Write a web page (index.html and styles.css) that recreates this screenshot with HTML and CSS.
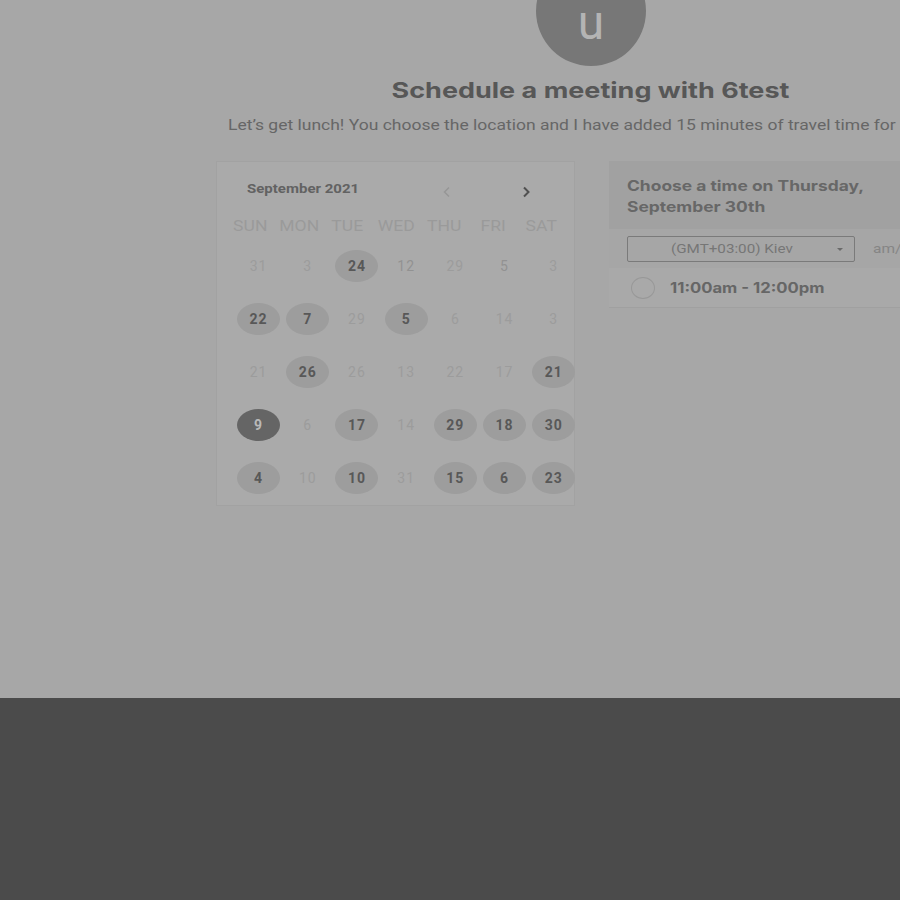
FILE: index.html
```html
<!DOCTYPE html>
<html>
<head>
<meta charset="utf-8">
<link rel="stylesheet" href="styles.css">
</head>
<body>
<div class="viewport">
  <div class="page">
    <div class="avatar"><span>u</span></div>
    <h1 class="title"><span class="wide">Schedule a meeting with 6test</span></h1>
    <p class="subtitle"><span class="wide">Let’s get lunch! You choose the location and I have added 15 minutes of travel time for meeting.</span></p>
    <div class="columns">
      <div class="calendar">
        <div class="cal-head">
          <span class="month"><span class="wide-l">September 2021</span></span>
          <span class="nav prev"><svg width="12" height="12" viewBox="0 0 12 12"><path d="M8 1.5 L3.5 6 L8 10.5" fill="none" stroke="currentColor" stroke-width="1.5"/></svg></span>
          <span class="nav next"><svg width="12" height="12" viewBox="0 0 12 12"><path d="M4 1.5 L8.5 6 L4 10.5" fill="none" stroke="currentColor" stroke-width="2"/></svg></span>
        </div>
        <div class="weekdays">
          <span>SUN</span><span>MON</span><span>TUE</span><span>WED</span><span>THU</span><span>FRI</span><span>SAT</span>
        </div>
        <div class="days">
          <span class="d off">31</span><span class="d off">3</span><span class="d av">24</span><span class="d mid">12</span><span class="d off">29</span><span class="d mid">5</span><span class="d off">3</span>
          <span class="d av">22</span><span class="d av">7</span><span class="d off">29</span><span class="d av">5</span><span class="d off">6</span><span class="d off">14</span><span class="d off">3</span>
          <span class="d off">21</span><span class="d av">26</span><span class="d off">26</span><span class="d off">13</span><span class="d off">22</span><span class="d off">17</span><span class="d av">21</span>
          <span class="d sel">9</span><span class="d off">6</span><span class="d av">17</span><span class="d off">14</span><span class="d av">29</span><span class="d av">18</span><span class="d av">30</span>
          <span class="d av">4</span><span class="d off">10</span><span class="d av">10</span><span class="d off">31</span><span class="d av">15</span><span class="d av">6</span><span class="d av">23</span>
        </div>
      </div>
      <div class="times">
        <div class="times-head">
          <span class="wide-l">Choose a time on Thursday,</span><br>
          <span class="wide-l">September 30th</span>
        </div>
        <div class="tz-row">
          <div class="tz-select"><span class="wide-l">(GMT+03:00) Kiev</span><span class="caret"></span></div>
          <span class="ampm"><span class="wide-l">am/pm</span></span>
        </div>
        <div class="slot">
          <span class="radio"></span>
          <span class="slot-text"><span class="wide-l">11:00am - 12:00pm</span></span>
        </div>
      </div>
    </div>
  </div>
  <div class="footer"></div>
</div>
</body>
</html>
```

FILE: styles.css
```css
html, body {
  margin: 0;
  padding: 0;
  overflow: hidden;
  background: #4b4b4b;
}
.viewport {
  width: 900px;
  height: 900px;
  overflow: hidden;
}
.page {
  width: 1182px;
  height: 698px;
  background: #a7a7a7;
  display: flex;
  flex-direction: column;
  align-items: center;
  font-family: Roboto, "Liberation Sans", sans-serif;
  overflow: hidden;
}
.footer {
  height: 202px;
  background: #4b4b4b;
}
.wide {
  display: inline-block;
  transform: scaleX(1.255);
  transform-origin: center;
}
.wide-l {
  display: inline-block;
  transform: scaleX(1.19);
  transform-origin: left center;
}
.avatar {
  width: 110px;
  height: 110px;
  border-radius: 50%;
  background: #777777;
  margin-top: -44px;
  display: flex;
  justify-content: center;
  align-items: center;
  color: #b4b4b4;
  font-size: 48px;
  line-height: 30px;
  flex-shrink: 0;
}
.avatar span {
  margin-top: 23px;
}
.title {
  margin: 11px 0 0;
  font-family: Inter, "Liberation Sans", sans-serif;
  font-weight: 700;
  font-size: 21.5px;
  line-height: 26px;
  color: #575757;
}
.subtitle {
  margin: 13px 0 0 14px;
  font-size: 14px;
  line-height: 18px;
  color: #666666;
  white-space: nowrap;
}
.subtitle .wide {
  transform: scaleX(1.25);
}
.columns {
  margin-top: 27px;
  display: flex;
  gap: 34px;
  align-items: flex-start;
}
.calendar {
  width: 357px;
  height: 343px;
  background: #aaaaaa;
  border: 1px solid #a2a2a2;
}
.cal-head {
  display: flex;
  align-items: center;
  height: 50px;
  padding-left: 30px;
}
.month {
  font-size: 12px;
  font-weight: 700;
  color: #626262;
  width: 194px;
  margin-top: 4px;
}
.month .wide-l {
  transform: scaleX(1.25);
}
.nav {
  display: flex;
  margin-top: 10px;
}
.nav.prev {
  color: #969696;
}
.nav.next {
  color: #505050;
  margin-left: 67px;
}
.weekdays {
  display: grid;
  grid-template-columns: repeat(7, 48.5px);
  margin-left: 9px;
  height: 28px;
  align-items: center;
}
.weekdays span {
  text-align: center;
  font-size: 15px;
  color: #9a9a9a;
  transform: scaleX(1.17);
}
.days {
  display: grid;
  grid-template-columns: repeat(7, 49.2px);
  grid-auto-rows: 53px;
  margin-left: 17px;
  margin-top: -1px;
  align-items: center;
  justify-items: center;
}
.d {
  width: 43px;
  height: 32px;
  border-radius: 50%;
  display: flex;
  justify-content: center;
  align-items: center;
  font-size: 14px;
  letter-spacing: 1px;
}
.d.off {
  color: #9c9c9c;
}
.d.mid {
  color: #929292;
}
.d.av {
  background: #9d9d9d;
  color: #585858;
  font-weight: 700;
}
.d.sel {
  background: #656565;
  color: #b9b9b9;
  font-weight: 700;
}
.times {
  width: 357px;
  background: #a9a9a9;
  border-bottom: 1px solid #a0a0a0;
}
.times-head {
  background: #a1a1a1;
  height: 68px;
  box-sizing: border-box;
  padding: 14px 18px 0;
  font-family: Inter, "Liberation Sans", sans-serif;
  font-weight: 700;
  font-size: 14.5px;
  line-height: 21px;
  color: #676767;
}
.times-head .wide-l {
  transform: scaleX(1.2);
}
.tz-row {
  display: flex;
  align-items: center;
  height: 39px;
  padding-left: 18px;
  background: #a6a6a6;
}
.tz-select {
  width: 228px;
  height: 26px;
  box-sizing: border-box;
  border: 1px solid #7a7a7a;
  border-radius: 2px;
  display: flex;
  align-items: center;
  padding-left: 43px;
  font-size: 13px;
  color: #767676;
  position: relative;
}
.tz-select .wide-l {
  transform: scaleX(1.17);
}
.caret {
  position: absolute;
  right: 11px;
  top: 11px;
  width: 0;
  height: 0;
  border-left: 3.5px solid transparent;
  border-right: 3.5px solid transparent;
  border-top: 3.5px solid #6a6a6a;
}
.ampm {
  margin-left: 18px;
  font-size: 13px;
  color: #858585;
}
.slot {
  display: flex;
  align-items: center;
  height: 39px;
  padding-left: 22px;
}
.radio {
  width: 24px;
  height: 22px;
  border: 1.5px solid #989898;
  border-radius: 50%;
  box-sizing: border-box;
}
.slot-text {
  margin-left: 15px;
  font-family: Inter, "Liberation Sans", sans-serif;
  font-size: 14.5px;
  font-weight: 700;
  color: #666666;
}
.slot-text .wide-l {
  transform: scaleX(1.15);
}
```
